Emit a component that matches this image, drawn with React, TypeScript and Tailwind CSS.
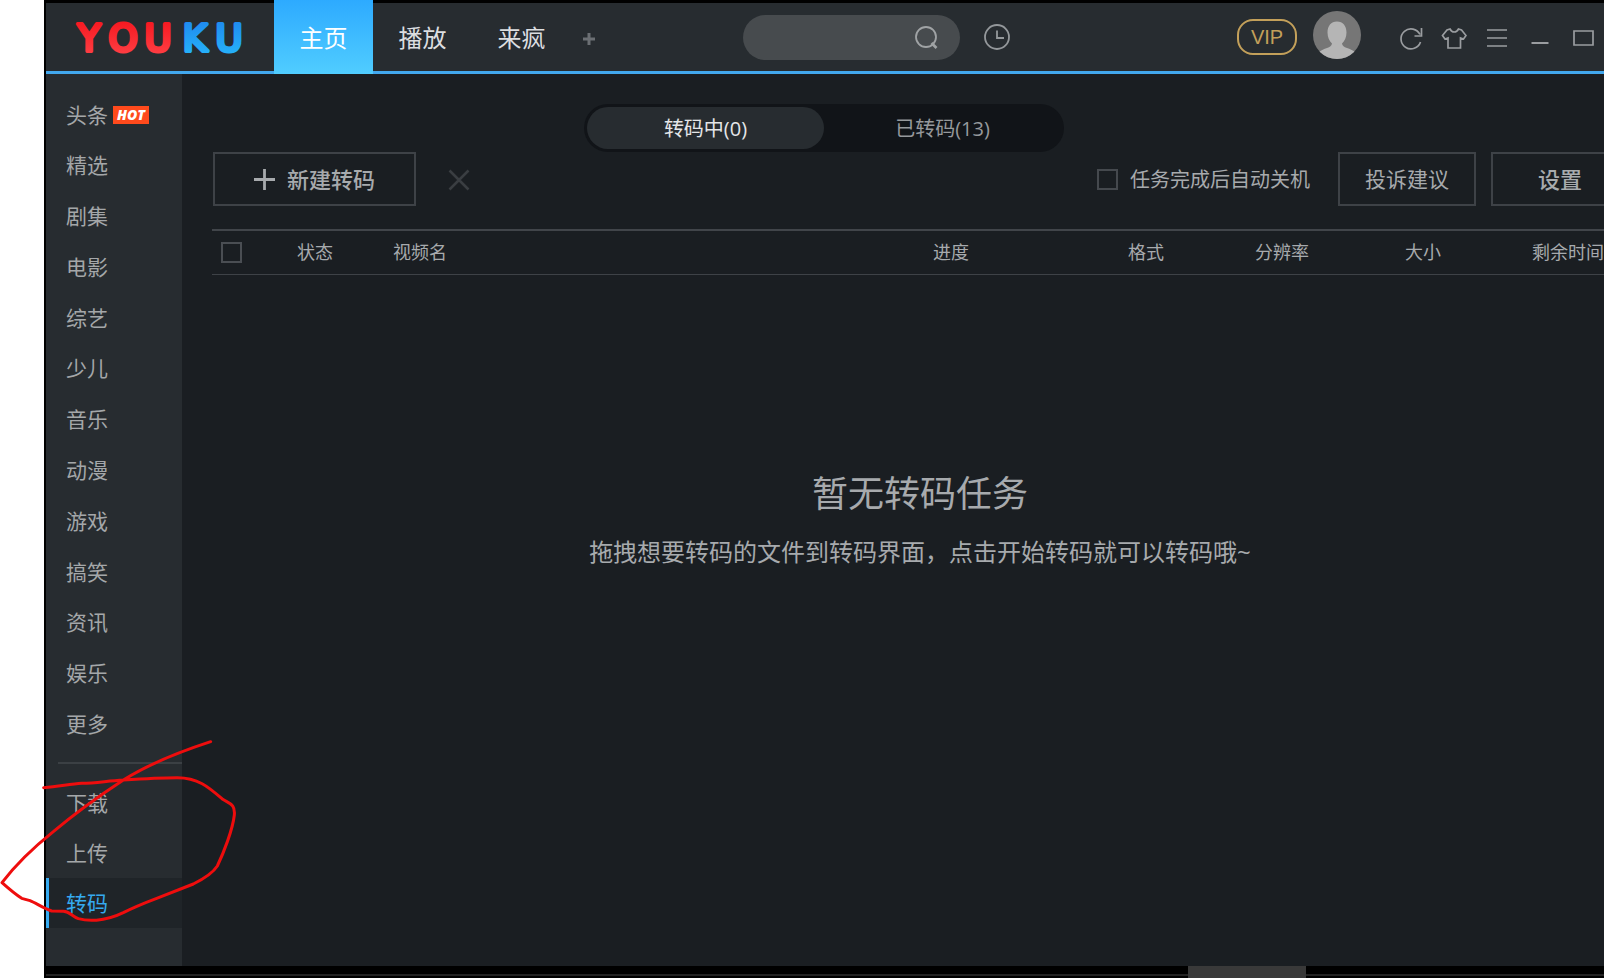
import React from 'react';

const channels = ['头条', '精选', '剧集', '电影', '综艺', '少儿', '音乐', '动漫', '游戏', '搞笑', '资讯', '娱乐', '更多'];
const tasks = ['下载', '上传', '转码'];
const columns = [
  { name: '状态', width: 'w-[96px]' },
  { name: '视频名', width: 'w-auto' },
  { name: '进度', width: 'w-[195px]' },
  { name: '格式', width: 'w-[127px]' },
  { name: '分辨率', width: 'w-[150px]' },
  { name: '大小', width: 'w-[127px]' },
  { name: '剩余时间', width: 'w-[126px]' },
];

function Logo() {
  return (
    <svg className="block h-14 w-[174px] shrink-0" viewBox="0 0 174 56" role="img" aria-label="YOUKU">
      <defs>
        <linearGradient id="red" x1="0" y1="0" x2="0" y2="1">
          <stop offset="0" stopColor="#f5141c" />
          <stop offset="1" stopColor="#ff4449" />
        </linearGradient>
        <linearGradient id="blue" x1="0" y1="0" x2="0" y2="1">
          <stop offset="0" stopColor="#1e86ee" />
          <stop offset="1" stopColor="#27b8fb" />
        </linearGradient>
      </defs>
      <g
        fontFamily="'DejaVu Sans', sans-serif"
        fontSize="37"
        fontWeight="400"
        textAnchor="middle"
        strokeWidth="4"
        strokeLinejoin="round"
      >
        <text y="42" fill="url(#red)" stroke="url(#red)">
          <tspan x="17">Y</tspan>
          <tspan x="51">O</tspan>
          <tspan x="86">U</tspan>
        </text>
        <text y="42" fill="url(#blue)" stroke="url(#blue)">
          <tspan x="123">K</tspan>
          <tspan x="157">U</tspan>
        </text>
      </g>
    </svg>
  );
}

function IconButton({ label, children }: { label: string; children: React.ReactNode }) {
  return (
    <button aria-label={label} className="flex h-12 w-[43px] shrink-0 items-center justify-center text-[#9a9da0]">
      <svg width="26" height="26" viewBox="0 0 26 26" fill="none" stroke="currentColor" strokeWidth="1.7">
        {children}
      </svg>
    </button>
  );
}

function Header() {
  return (
    <header className="flex h-[74px] shrink-0 items-center border-t-[3px] border-b-[3px] border-t-black border-b-[#42a8ee] bg-[#272c30] pl-[26px]">
      <Logo />
      <nav className="-my-[3px] ml-7 flex shrink-0 self-stretch text-2xl text-[#dcdee0]">
        <a href="#home" className="flex w-[99px] items-center justify-center bg-linear-to-b from-[#2daaff] to-[#50cdff] pt-0.5 text-white">主页</a>
        <a href="#play" className="flex w-[99px] items-center justify-center pt-0.5">播放</a>
        <a href="#laifeng" className="flex w-[99px] items-center justify-center pt-0.5">来疯</a>
        <button aria-label="添加" className="flex w-9 items-center justify-center pt-1">
          <svg width="12" height="12" viewBox="0 0 12 12" stroke="#6b6f73" strokeWidth="3"><path d="M6 0v12M0 6h12" /></svg>
        </button>
      </nav>
      <label className="ml-[136px] flex h-[45px] w-[217px] shrink-0 items-center rounded-full bg-[#474b4e] pr-[22px] pl-5">
        <input type="text" aria-label="搜索" className="min-w-0 flex-1 bg-transparent text-lg text-white outline-none" />
        <svg width="24" height="24" viewBox="0 0 24 24" fill="none" stroke="#a0a3a5" strokeWidth="1.8">
          <circle cx="12" cy="12" r="10" />
          <path d="M17.5 18l5 5" strokeWidth="2.6" />
        </svg>
      </label>
      <button aria-label="历史" className="ml-6 shrink-0">
        <svg width="26" height="26" viewBox="0 0 26 26" fill="none" stroke="#94989b" strokeWidth="1.8">
          <circle cx="13" cy="13" r="12" />
          <path d="M13 6.500v7.500h7" />
        </svg>
      </button>
      <div className="ml-auto flex shrink-0 items-center">
        <a href="#vip" className="flex h-9 w-[60px] items-center justify-center rounded-2xl border-2 border-[#c3a05a] font-['Liberation_Sans',sans-serif] text-xl text-[#c3a05a]">VIP</a>
        <svg className="mr-7 mb-1 ml-4" width="48" height="48" viewBox="0 0 48 48" role="img" aria-label="头像">
          <defs><clipPath id="avatar"><circle cx="24" cy="24" r="24" /></clipPath></defs>
          <g clipPath="url(#avatar)">
            <rect width="48" height="48" fill="#767676" />
            <path d="M24 10.500c6 0 9.500 4.500 9.500 11 0 5-2 8.500-4.500 11 .3 2.500 2 3.500 5 4.500 3 1 5.500 2 8 4V48H6v-7c2.500-2 5-3 8-4 3-1 4.700-2 5-4.500-2.500-2.500-4.500-6-4.500-11 0-6.500 3.500-11 9.500-11z" fill="#b5b5b5" />
          </g>
        </svg>
        <div className="flex pt-0.5">
          <IconButton label="刷新">
            <path d="M22 9.500A10 10 0 1 0 22.500 17M23.500 3v8h-7" />
          </IconButton>
          <IconButton label="皮肤">
            <path d="M9 4L6 5 1.500 10.500 4 14l3-1v10h12.500V13l3 1L25 10.500 20.500 5 17.500 4c-1 2-2.500 3-4.300 3S10 6 9 4z" />
          </IconButton>
          <IconButton label="菜单">
            <path d="M3 5h20M3 13h20M3 21h20" />
          </IconButton>
          <IconButton label="最小化">
            <path d="M4.500 18h17" strokeWidth="2" />
          </IconButton>
          <IconButton label="最大化">
            <path d="M4 6h19v14H4z" />
          </IconButton>
        </div>
      </div>
    </header>
  );
}

function Sidebar() {
  return (
    <aside className="flex w-[136px] shrink-0 flex-col bg-[#272c30] pt-[15px] pb-[38px] text-[21px] text-[#a4a7a9]">
      <ul className="grid flex-1 auto-rows-fr">
        {channels.map((name) => (
          <li key={name} className="flex">
            <a href={`#${name}`} className="flex flex-1 items-center gap-[5px] pt-0.5 pl-5">
              {name}
              {name === '头条' && (
                <span className="flex h-[18px] w-9 items-center justify-center bg-[#ff4a1c] font-['Open_Sans',sans-serif] text-sm font-extrabold text-white italic">HOT</span>
              )}
            </a>
          </li>
        ))}
      </ul>
      <hr className="mt-[13px] mb-3.5 ml-3 border-t-2 border-[#3b4044]" />
      <ul>
        {tasks.map((name) => (
          <li key={name}>
            <a
              href={`#${name}`}
              className={
                name === '转码'
                  ? 'flex h-[50px] items-center border-l-[3px] border-[#35aaf0] bg-[#1f2428] pt-0.5 pl-[17px] text-[#35aaf0]'
                  : 'flex h-[50px] items-center pt-0.5 pl-5'
              }
            >
              {name}
            </a>
          </li>
        ))}
      </ul>
    </aside>
  );
}

function Main() {
  return (
    <main className="-mr-[54px] flex min-w-0 flex-1 flex-col bg-[#1a1e22] pt-[30px] text-[#a7aaad]">
      <div className="ml-[402px] flex h-12 w-[480px] rounded-full bg-[#111418] p-[3px] text-xl">
        <button className="flex-1 rounded-full bg-[#272c30] pt-0.5 text-[#e4e6e8]">转码中(0)</button>
        <button className="flex-1 rounded-full pt-0.5 text-[#96999c]">已转码(13)</button>
      </div>
      <div className="flex items-center pr-[29px] pl-[31px]">
        <button className="flex h-[54px] w-[203px] items-center justify-center gap-3 border-2 border-[#3e4247] text-[22px] font-medium">
          <svg width="21" height="21" viewBox="0 0 21 21" stroke="currentColor" strokeWidth="2.800"><path d="M10.500 0v21M0 10.500h21" /></svg>
          新建转码
        </button>
        <button aria-label="删除" className="ml-8 pt-0.5">
          <svg width="22" height="22" viewBox="0 0 22 22" stroke="#3a3e42" strokeWidth="2.500"><path d="M1.500 1.500l19 19M20.500 1.500l-19 19" /></svg>
        </button>
        <label className="mr-7 ml-auto flex items-center gap-3 text-xl">
          <input type="checkbox" className="size-[21px] appearance-none border-2 border-[#45494e]" />
          <span className="pt-0.5">任务完成后自动关机</span>
        </label>
        <button className="mr-[15px] h-[54px] w-[138px] border-2 border-[#3e4247] pt-0.5 text-[21px]">投诉建议</button>
        <button className="h-[54px] w-[138px] border-2 border-[#3e4247] text-[22px] font-medium">设置</button>
      </div>
      <div className="mt-[23px] pl-[30px]">
        <table className="w-full table-fixed border-collapse text-left text-lg">
          <thead>
            <tr className="h-11 border-t-2 border-b border-t-[#41454a] border-b-[#3e4247]">
              <th className="w-[85px] p-0 pl-[9px]">
                <input type="checkbox" aria-label="全选" className="block size-[21px] appearance-none border-2 border-[#4a4e53]" />
              </th>
              {columns.map((column) => (
                <th key={column.name} className={`${column.width} p-0 font-normal whitespace-nowrap`}>{column.name}</th>
              ))}
            </tr>
          </thead>
        </table>
      </div>
      <section className="flex flex-1 flex-col items-center pt-[192px]">
        <h1 className="text-4xl leading-[54px]">暂无转码任务</h1>
        <p className="mt-[13px] text-2xl leading-9">拖拽想要转码的文件到转码界面，点击开始转码就可以转码哦~</p>
      </section>
    </main>
  );
}

export default function App() {
  return (
    <div className="relative flex h-screen min-h-[900px] overflow-hidden bg-white pl-11 font-['Open_Sans','Noto_Sans_CJK_SC',sans-serif]">
      <div className="flex min-w-0 flex-1 flex-col border-l-2 border-black">
        <Header />
        <div className="flex min-h-0 flex-1">
          <Sidebar />
          <Main />
        </div>
        <footer className="flex h-3 shrink-0 flex-col justify-end bg-black pb-0.5">
          <div className="h-0.5 bg-[#232323]" />
        </footer>
      </div>
      <div className="absolute right-[298px] bottom-0 h-3 w-[118px] bg-[#393939]" />
      <svg
        className="pointer-events-none absolute bottom-0 left-0 h-[248px] w-[260px]"
        viewBox="0 0 780 744"
        fill="none"
        stroke="#ee0d0d"
        strokeWidth="9"
        strokeLinecap="round"
        strokeLinejoin="round"
        aria-hidden="true"
      >
        <path d="M131 173C180 169 210 162 245 160C290 159 320 153 370 150C430 146 490 143 530 143C595 142 630 175 668 208C690 222 706 222 703 255C698 300 670 370 652 408C638 430 610 447 580 462L470 505C420 524 395 535 370 548C310 577 260 573 235 566C215 558 210 545 190 544L155 543C130 535 110 520 90 512L65 505C45 492 25 475 6 458C50 400 110 345 160 305C230 246 300 196 370 150C450 100 540 65 632 35" />
      </svg>
    </div>
  );
}
